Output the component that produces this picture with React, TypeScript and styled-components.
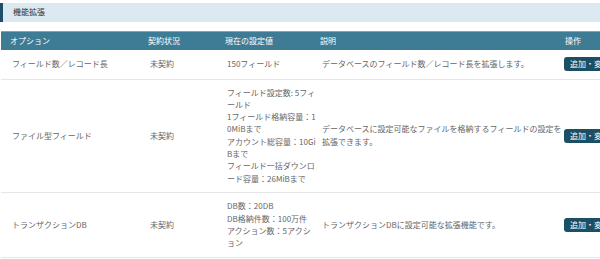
import React from "react";
import styled, { createGlobalStyle } from "styled-components";

interface IOption {
  id: string;
  name: string;
  status: string;
  // line breaks follow the column's wrap in the design
  values: string[];
  description: string;
}

const OPTIONS: IOption[] = [
  {
    id: "field",
    name: "フィールド数／レコード長",
    status: "未契約",
    values: ["150フィールド"],
    description: "データベースのフィールド数／レコード長を拡張します。",
  },
  {
    id: "file",
    name: "ファイル型フィールド",
    status: "未契約",
    values: [
      "フィールド設定数: 5フィ\nールド",
      "1フィールド格納容量：1\n0MiBまで",
      "アカウント総容量：10Gi\nBまで",
      "フィールド一括ダウンロ\nード容量：26MiBまで",
    ],
    description:
      "データベースに設定可能なファイルを格納するフィールドの設定を拡張できます。",
  },
  {
    id: "tx",
    name: "トランザクションDB",
    status: "未契約",
    values: ["DB数：20DB", "DB格納件数：100万件", "アクション数：5アクシ\nョン"],
    description: "トランザクションDBに設定可能な拡張機能です。",
  },
];

function App() {
  return (
    <>
      <GlobalStyle />
      <Page>
        <SectionTitle>機能拡張</SectionTitle>
        <Table>
          <colgroup>
            <col style={{ width: 138 }} />
            <col style={{ width: 77 }} />
            <col style={{ width: 95 }} />
            <col style={{ width: 245 }} />
            <col style={{ width: 75 }} />
          </colgroup>
          <thead>
            <tr>
              <Th>オプション</Th>
              <Th>契約状況</Th>
              <Th>現在の設定値</Th>
              <Th>説明</Th>
              <Th>操作</Th>
            </tr>
          </thead>
          <tbody>
            {OPTIONS.map((option) => (
              <Row key={option.id}>
                <Td>{option.name}</Td>
                <Td>{option.status}</Td>
                <Td>
                  <Values>
                    {option.values.map((v) => (
                      <div key={v}>{v}</div>
                    ))}
                  </Values>
                </Td>
                <Td>
                  <Description>{option.description}</Description>
                </Td>
                <Td>
                  <EditButton type="button">追加・変更</EditButton>
                </Td>
              </Row>
            ))}
          </tbody>
        </Table>
      </Page>
    </>
  );
}

export default App;

const GlobalStyle = createGlobalStyle`
  html, body {
    margin: 0;
    padding: 0;
    background: #fff;
    overflow: hidden;
  }
  body {
    font-family: "Noto Sans CJK JP", "Noto Sans", sans-serif;
    font-size: 8px;
    line-height: 12.3px;
    color: #666;
  }
`;

const Page = styled.div`
  width: 640px;
  padding-top: 3px;
`;

const SectionTitle = styled.h2`
  margin: 0;
  height: 19px;
  display: flex;
  align-items: center;
  padding-left: 10px;
  border-left: 3px solid #1e4f66;
  background: #dde9f1;
  font-size: 8px;
  font-weight: normal;
  color: #333;
`;

const Table = styled.table`
  margin: 9px 0 0 1px;
  border-collapse: collapse;
  table-layout: fixed;
  width: 630px;
`;

const Th = styled.th`
  height: 18px;
  padding: 0 0 0 9px;
  background: #3e7c95;
  border-top: 1px solid #7fa6b8;
  color: #fff;
  font-weight: normal;
  text-align: left;
  white-space: nowrap;
`;

const Row = styled.tr`
  border-bottom: 1px solid #e6e6e6;
`;

const Td = styled.td`
  padding: 7px 0 7.5px 11px;
  vertical-align: middle;
  color: #666;
  word-break: break-all;
`;

const Values = styled.div`
  white-space: pre;
`;

const Description = styled.div`
  width: 244px;
`;

const EditButton = styled.button`
  display: inline-block;
  margin-left: -3px;
  height: 14px;
  padding: 0 6px;
  border: none;
  border-radius: 3px;
  background: #1d4f64;
  color: #fff;
  font-family: inherit;
  font-size: 8px;
  line-height: 14px;
  white-space: nowrap;
`;
